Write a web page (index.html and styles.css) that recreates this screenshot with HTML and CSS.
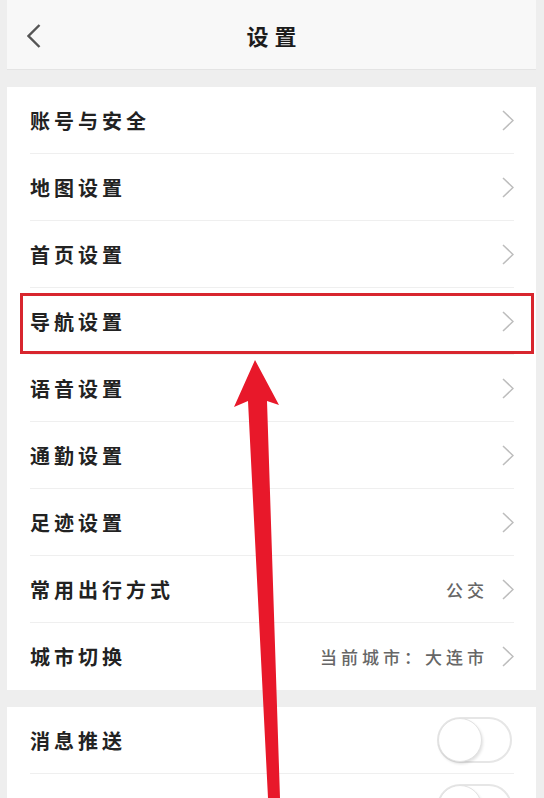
FILE: index.html
```html
<!DOCTYPE html>
<html lang="zh">
<head>
<meta charset="utf-8">
<title>设置</title>
<link rel="stylesheet" href="styles.css">
</head>
<body>
<div class="page">
  <header class="topbar">
    <svg class="back" width="14" height="24" viewBox="0 0 14 24"><polyline points="12.5,1 1.5,12 12.5,23" fill="none" stroke="#555" stroke-width="2.4"/></svg>
    <h1 class="title">设置</h1>
  </header>

  <section class="group">
    <div class="row"><div class="row-inner"><span class="label">账号与安全</span><span class="right"><svg class="chev" width="12" height="21" viewBox="0 0 12 21"><polyline points="1,1 11,10.5 1,20" fill="none" stroke="#bdbdbd" stroke-width="1.5"/></svg></span></div></div>
    <div class="row"><div class="row-inner"><span class="label">地图设置</span><span class="right"><svg class="chev" width="12" height="21" viewBox="0 0 12 21"><polyline points="1,1 11,10.5 1,20" fill="none" stroke="#bdbdbd" stroke-width="1.5"/></svg></span></div></div>
    <div class="row"><div class="row-inner"><span class="label">首页设置</span><span class="right"><svg class="chev" width="12" height="21" viewBox="0 0 12 21"><polyline points="1,1 11,10.5 1,20" fill="none" stroke="#bdbdbd" stroke-width="1.5"/></svg></span></div></div>
    <div class="row highlighted"><div class="row-inner"><span class="label">导航设置</span><span class="right"><svg class="chev" width="12" height="21" viewBox="0 0 12 21"><polyline points="1,1 11,10.5 1,20" fill="none" stroke="#bdbdbd" stroke-width="1.5"/></svg></span></div><div class="mark"></div></div>
    <div class="row"><div class="row-inner"><span class="label">语音设置</span><span class="right"><svg class="chev" width="12" height="21" viewBox="0 0 12 21"><polyline points="1,1 11,10.5 1,20" fill="none" stroke="#bdbdbd" stroke-width="1.5"/></svg></span></div></div>
    <div class="row"><div class="row-inner"><span class="label">通勤设置</span><span class="right"><svg class="chev" width="12" height="21" viewBox="0 0 12 21"><polyline points="1,1 11,10.5 1,20" fill="none" stroke="#bdbdbd" stroke-width="1.5"/></svg></span></div></div>
    <div class="row"><div class="row-inner"><span class="label">足迹设置</span><span class="right"><svg class="chev" width="12" height="21" viewBox="0 0 12 21"><polyline points="1,1 11,10.5 1,20" fill="none" stroke="#bdbdbd" stroke-width="1.5"/></svg></span></div></div>
    <div class="row"><div class="row-inner"><span class="label">常用出行方式</span><span class="right"><span class="value">公交</span><svg class="chev" width="12" height="21" viewBox="0 0 12 21"><polyline points="1,1 11,10.5 1,20" fill="none" stroke="#bdbdbd" stroke-width="1.5"/></svg></span></div></div>
    <div class="row last"><div class="row-inner"><span class="label">城市切换</span><span class="right"><span class="value">当前城市：大连市</span><svg class="chev" width="12" height="21" viewBox="0 0 12 21"><polyline points="1,1 11,10.5 1,20" fill="none" stroke="#bdbdbd" stroke-width="1.5"/></svg></span></div></div>
  </section>

  <section class="group">
    <div class="row"><div class="row-inner"><span class="label">消息推送</span><span class="toggle"><span class="knob"></span></span></div></div>
    <div class="row last"><div class="row-inner"><span class="label">WiFi下自动下载最新数据</span><span class="toggle"><span class="knob"></span></span></div></div>
  </section>
</div>

<svg class="arrow" width="544" height="798" viewBox="0 0 544 798">
  <polygon points="255,360 279,405 267,401 280,798 268,798 248,401 234,407" fill="#e8182a"/>
</svg>
</body>
</html>
```

FILE: styles.css
```css
html, body {
  margin: 0;
  padding: 0;
}
body {
  background: #eeeeee;
  font-family: "Noto Sans CJK SC", "Noto Sans", sans-serif;
  width: 544px;
  height: 798px;
  overflow: hidden;
  position: relative;
}
.page {
  margin: 0 8px 0 7px;
}
.topbar {
  height: 69px;
  background: #f8f8f8;
  border-bottom: 1px solid #e4e4e4;
  display: flex;
  align-items: center;
  justify-content: center;
  position: relative;
}
.back {
  position: absolute;
  left: 20px;
  top: 24px;
}
.title {
  margin: 0;
  font-size: 22px;
  font-weight: 700;
  letter-spacing: 6px;
  margin-right: -6px;
  color: #1c1c1c;
}
.group {
  background: #ffffff;
  margin-top: 17px;
}
.row {
  position: relative;
  padding: 0 22px 0 23px;
}
.row-inner {
  height: 66px;
  border-bottom: 1px solid #efefef;
  display: flex;
  align-items: center;
  justify-content: space-between;
}
.row.last .row-inner {
  border-bottom-color: transparent;
}
.label {
  font-size: 20px;
  font-weight: 700;
  letter-spacing: 4px;
  color: #222222;
}
.right {
  display: flex;
  align-items: center;
}
.value {
  font-size: 17px;
  font-weight: 500;
  letter-spacing: 4px;
  color: #666666;
  margin-right: 14px;
}
.chev {
  display: block;
}
.mark {
  position: absolute;
  left: 13px;
  right: 2px;
  top: 5px;
  bottom: 1px;
  border: 3px solid #d8262e;
}
.toggle {
  width: 71px;
  height: 42px;
  border: 2px solid #e6e6e6;
  border-radius: 23px;
  position: relative;
  margin-right: 2px;
  background: #fff;
}
.knob {
  position: absolute;
  left: -1px;
  top: -1px;
  width: 42px;
  height: 42px;
  border-radius: 50%;
  border: 1px solid #e2e2e2;
  background: #fff;
  box-shadow: 1px 2px 3px rgba(0,0,0,0.12);
}
.arrow {
  position: absolute;
  left: 0;
  top: 0;
  pointer-events: none;
}
```
